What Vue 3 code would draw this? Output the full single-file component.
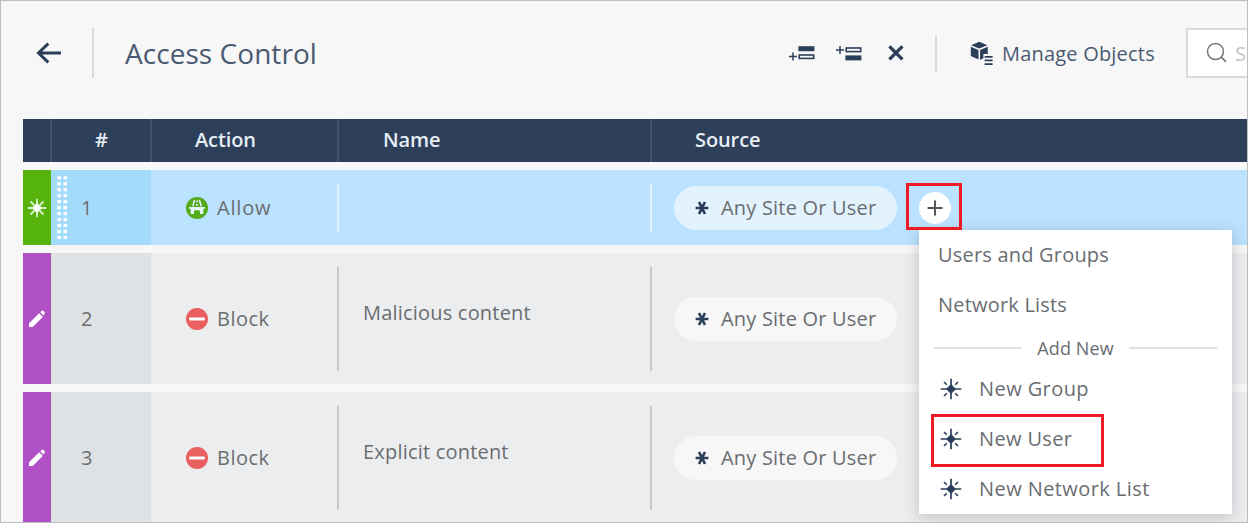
<script setup>
const rows = [
  { n: 1, action: 'Allow', name: '', kind: 'new' },
  { n: 2, action: 'Block', name: 'Malicious content', kind: 'edited' },
  { n: 3, action: 'Block', name: 'Explicit content', kind: 'edited' },
]
const newItems = [
  { label: 'New Group', cls: 't-group' },
  { label: 'New User', cls: 't-user' },
  { label: 'New Network List', cls: 't-list' },
]
</script>

<template>
  <div class="page">
    <header class="toolbar">
      <svg class="back" width="27" height="24" viewBox="0 0 27 24">
        <path d="M26 12H3.500M13.300 2.600L3.500 12l9.800 9.400" fill="none" stroke="#2c3f5a" stroke-width="3" />
      </svg>
      <span class="rule tall"></span>
      <h1>Access Control</h1>
      <div class="tools">
        <svg width="26" height="16" viewBox="0 0 26 16">
          <path d="M0 11.400h8M4 7.400v8" stroke="#2c3f5a" stroke-width="1.500" />
          <rect x="9.400" y="1.200" width="16" height="5" fill="#2c3f5a" />
          <rect x="10.200" y="10" width="14.500" height="3.400" fill="none" stroke="#2c3f5a" stroke-width="1.600" />
        </svg>
        <svg class="below" width="26" height="16" viewBox="0 0 26 16">
          <path d="M0 5h8M4 1v8" stroke="#2c3f5a" stroke-width="1.500" />
          <rect x="10.200" y="3" width="14.500" height="3.600" fill="none" stroke="#2c3f5a" stroke-width="1.600" />
          <rect x="9.400" y="10.400" width="16" height="5" fill="#2c3f5a" />
        </svg>
        <svg class="remove" width="16" height="16" viewBox="0 0 16 16">
          <path d="M1.400 1.400l13 13M14.400 1.400l-13 13" stroke="#2c3f5a" stroke-width="3.300" />
        </svg>
      </div>
      <span class="rule short"></span>
      <svg class="cube" width="24" height="24" viewBox="0 0 24 24">
        <g fill="#2c3f5a">
          <path d="M9.200 .8L17.400 4.200 9.200 7.600 1.100 4.200z" />
          <path d="M.8 5.700l7.700 3.300v9.600l-7.700-3.700z" />
          <path d="M10.100 9l7.700-3.300v7.400h-4.400v4.200l-3.300 1.600z" />
          <path d="M14.600 15h8v1.700h-8zM14.600 18.600h8v1.700h-8zM14.600 22.200h8v1.700h-8z" />
        </g>
      </svg>
      <span class="manage">Manage Objects</span>
      <div class="search">
        <svg width="22" height="22" viewBox="0 0 22 22">
          <circle cx="9.500" cy="9.500" r="8" fill="none" stroke="#757575" stroke-width="1.500" />
          <path d="M15.200 15.200l4.800 4.600" stroke="#757575" stroke-width="1.700" />
        </svg>
        <span>S</span>
      </div>
    </header>

    <section class="table">
      <div class="row head">
        <div class="strip"></div>
        <div class="num"><b>#</b></div>
        <div class="action"><b>Action</b></div>
        <div class="name"><b>Name</b></div>
        <div class="source"><b>Source</b></div>
      </div>

      <div v-for="r in rows" :key="r.n" class="row body" :class="r.kind">
        <div class="strip">
          <svg v-if="r.kind === 'new'" width="20" height="20" viewBox="0 0 20 20">
            <path d="M10 .8v18.400M.8 10h18.400M3.500 3.500l4 4M16.500 3.500l-4 4M3.500 16.500l4-4M16.500 16.500l-4-4" stroke="#d8f0c8" stroke-width="1.800" />
            <path d="M10 5l5 5-5 5-5-5z" fill="#fff" />
          </svg>
          <svg v-else width="18" height="18" viewBox="0 0 18 18">
            <path d="M1 17v-3.800L11.200 3.300l3.600 3.600L4.800 17zM12.200 2.300L13.900.7q.7-.5 1.400.1l1.400 1.400q.6.7 0 1.400l-1.200 1.900z" fill="#fff" />
          </svg>
        </div>
        <div class="num">
          <svg v-if="r.kind === 'new'" class="grip" width="11" height="64" viewBox="0 0 11 64">
            <g v-for="i in 11" :key="i" fill="#fff">
              <rect x="0.4" :y="(i - 1) * 5.97 + 0.2" width="3.5" height="3.200" />
              <rect x="6.5" :y="(i - 1) * 5.97 + 0.2" width="3.5" height="3.200" />
            </g>
          </svg>
          <span>{{ r.n }}</span>
        </div>
        <div class="action">
          <svg v-if="r.kind === 'new'" width="22" height="22" viewBox="0 0 22 22">
            <circle cx="11" cy="11" r="11" fill="#54ab1b" />
            <path d="M8.600 3L6.800 9.200M13.400 3l1.800 6.200M11 3.400v2M11 7v2" stroke="#e5f6ff" stroke-width="1.500" fill="none" />
            <path d="M3 10h16v1.800h-1.700V17h-3.300v-2.600q0-1.200-1.200-1.200h-3.600Q8 13.200 8 14.400V17H4.700v-5.200H3z" fill="#e5f6ff" />
          </svg>
          <svg v-else width="22" height="22" viewBox="0 0 22 22">
            <circle cx="11" cy="11" r="11" fill="#ea5f5f" />
            <rect x="3.200" y="9.400" width="15.600" height="3.200" rx=".8" fill="#fff" />
          </svg>
          <span :class="r.action.toLowerCase()">{{ r.action }}</span>
        </div>
        <div class="name"><i class="sep"></i><span>{{ r.name }}</span></div>
        <div class="source">
          <i class="sep"></i>
          <div class="chip">
            <svg width="14" height="14" viewBox="0 0 14 14">
              <path d="M.6 7h12.800M4 1l6 12M10 1L4 13" stroke="#2c3f5a" stroke-width="2.700" />
            </svg>
            <span>Any Site Or User</span>
          </div>
          <div v-if="r.kind === 'new'" class="plus">
            <svg width="16" height="16" viewBox="0 0 16 16">
              <path d="M8 .5v15M.5 8h15" stroke="#555" stroke-width="2" />
            </svg>
          </div>
        </div>
      </div>
    </section>

    <div class="menu">
      <div class="item t-users"><span>Users and Groups</span></div>
      <div class="item t-lists"><span>Network Lists</span></div>
      <div class="divider"><i></i><span>Add New</span><i></i></div>
      <div v-for="m in newItems" :key="m.label" class="item add" :class="m.cls">
        <svg width="22" height="22" viewBox="0 0 22 22">
          <path d="M11 .7v20.600M.7 11h20.600" stroke="#2c3f5a" stroke-width="1.700" />
          <path d="M4 4l2.800 2.800M18 4l-2.800 2.800M4 18l2.800-2.800M18 18l-2.800-2.800" stroke="#2c3f5a" stroke-width="1.600" />
          <path d="M11 6.500L15.500 11 11 15.500 6.500 11z" fill="#2c3f5a" stroke="#2c3f5a" stroke-width="1" />
        </svg>
        <span>{{ m.label }}</span>
      </div>
    </div>
    <div class="mark mark-plus"></div>
    <div class="mark mark-user"></div>
    <div class="frame"></div>
  </div>
</template>

<style>
body { background: #f7f7f7; overflow: hidden; }
</style>

<style scoped>
.page {
  position: relative; width: 1248px; height: 523px; overflow: hidden;
  box-sizing: border-box; background: #f7f7f7;
  font-family: "Open Sans", "Noto Sans", sans-serif; font-size: 20px; color: #6a6d70;
  letter-spacing: .2px; white-space: nowrap;
}
.page svg { flex: none; display: block; }
.page * { box-sizing: border-box; }
.toolbar { display: flex; align-items: center; height: 119px; padding: 0 0 13px 35px; }
.rule { width: 2px; background: #d6dae0; flex: none; }
.tall { height: 50px; margin-left: 30px; }
.short { height: 35px; margin-left: 31px; }
h1 {
  margin: 0 0 0 31px; flex: 0 0 664px; font-size: 28px; font-weight: 400;
  line-height: 40px; color: #4a5a72; letter-spacing: .05px;
}
.tools { display: flex; align-items: center; gap: 21px; }
.tools .remove { margin-left: 5px; }
.cube { margin-left: 33px; }
.manage { margin-left: 8px; color: #4a5a72; flex: 0 0 184px; }
.search {
  display: flex; align-items: center; flex: 0 0 240px; height: 50px; padding-left: 18px; gap: 7px;
  background: #fff; border: 2px solid #dadada; color: #c4c4c4; letter-spacing: 0;
}
.table { display: grid; row-gap: 8px; margin-left: 23px; }
.row { display: grid; grid-template-columns: 28px 100px 187px 313px 1fr; }
.row > div { display: flex; align-items: center; position: relative; }
.head { height: 43px; background: #2e3f59; color: #e6edf6; }
.head > div + div::before {
  content: ""; position: absolute; left: -1px; top: 0; width: 2px; height: 43px; background: #3f5272;
}
.head b { font-weight: 600; line-height: 28px; margin-top: -2px; letter-spacing: -.1px; }
.head .num { padding-left: 44px; }
.head .action, .head .source { padding-left: 44px; }
.head .name { padding-left: 45px; }
.body { height: 131px; background: #ecedef; }
.body.new { height: 75px; background: #bbe2fe; }
.body .strip { justify-content: center; background: #af50c4; }
.new .strip { background: #55b30b; }
.body .num { background: #dee2e5; padding-left: 30px; }
.new .num { background: #a3dbfb; }
.grip { position: absolute; left: 6px; top: 6px; }
.body .action { padding-left: 35px; gap: 9px; }
.allow { letter-spacing: .8px; }
.block { letter-spacing: .5px; }
.sep { position: absolute; left: -1px; top: 14px; bottom: 13px; width: 2px; background: #c6c8ca; }
.new .sep { background: #e1f2fe; }
.body .name { padding: 0 0 13px 25px; }
.body .source { padding-left: 23px; }
.chip {
  display: flex; align-items: center; gap: 12px; width: 223px; height: 44px; padding-left: 21px;
  border-radius: 22px; background: #f7f7f7;
}
.new .chip { background: #e3f3fe; }
.plus {
  display: flex; align-items: center; justify-content: center; width: 32px; height: 32px;
  margin-left: 22px; border-radius: 50%; background: #fff;
}
.menu {
  position: absolute; left: 919px; top: 230px; width: 313px; height: 284px;
  background: #fff; box-shadow: 0 3px 14px rgba(40, 50, 60, .24);
}
.item { display: flex; align-items: center; height: 50px; padding-left: 19px; }
.item span { margin-top: -2px; }
.item.add { padding-left: 21px; gap: 17px; }
.t-group, .t-list { letter-spacing: .42px; }
.t-user { letter-spacing: .35px; }
.divider { display: flex; align-items: center; height: 34px; padding: 0 15px; font-size: 18px; letter-spacing: .1px; }
.divider i { flex: 1; height: 2px; margin-top: 1px; background: #dfe2e9; }
.divider span { margin: 0 15px; padding-top: 1px; }
.mark { position: absolute; border: 3px solid #ed1c24; }
.mark-plus { left: 906px; top: 183px; width: 56px; height: 47px; }
.mark-user { left: 931px; top: 414px; width: 173px; height: 53px; }
.frame { position: absolute; inset: 0; border: 1px solid #bfbfbf; }
</style>
